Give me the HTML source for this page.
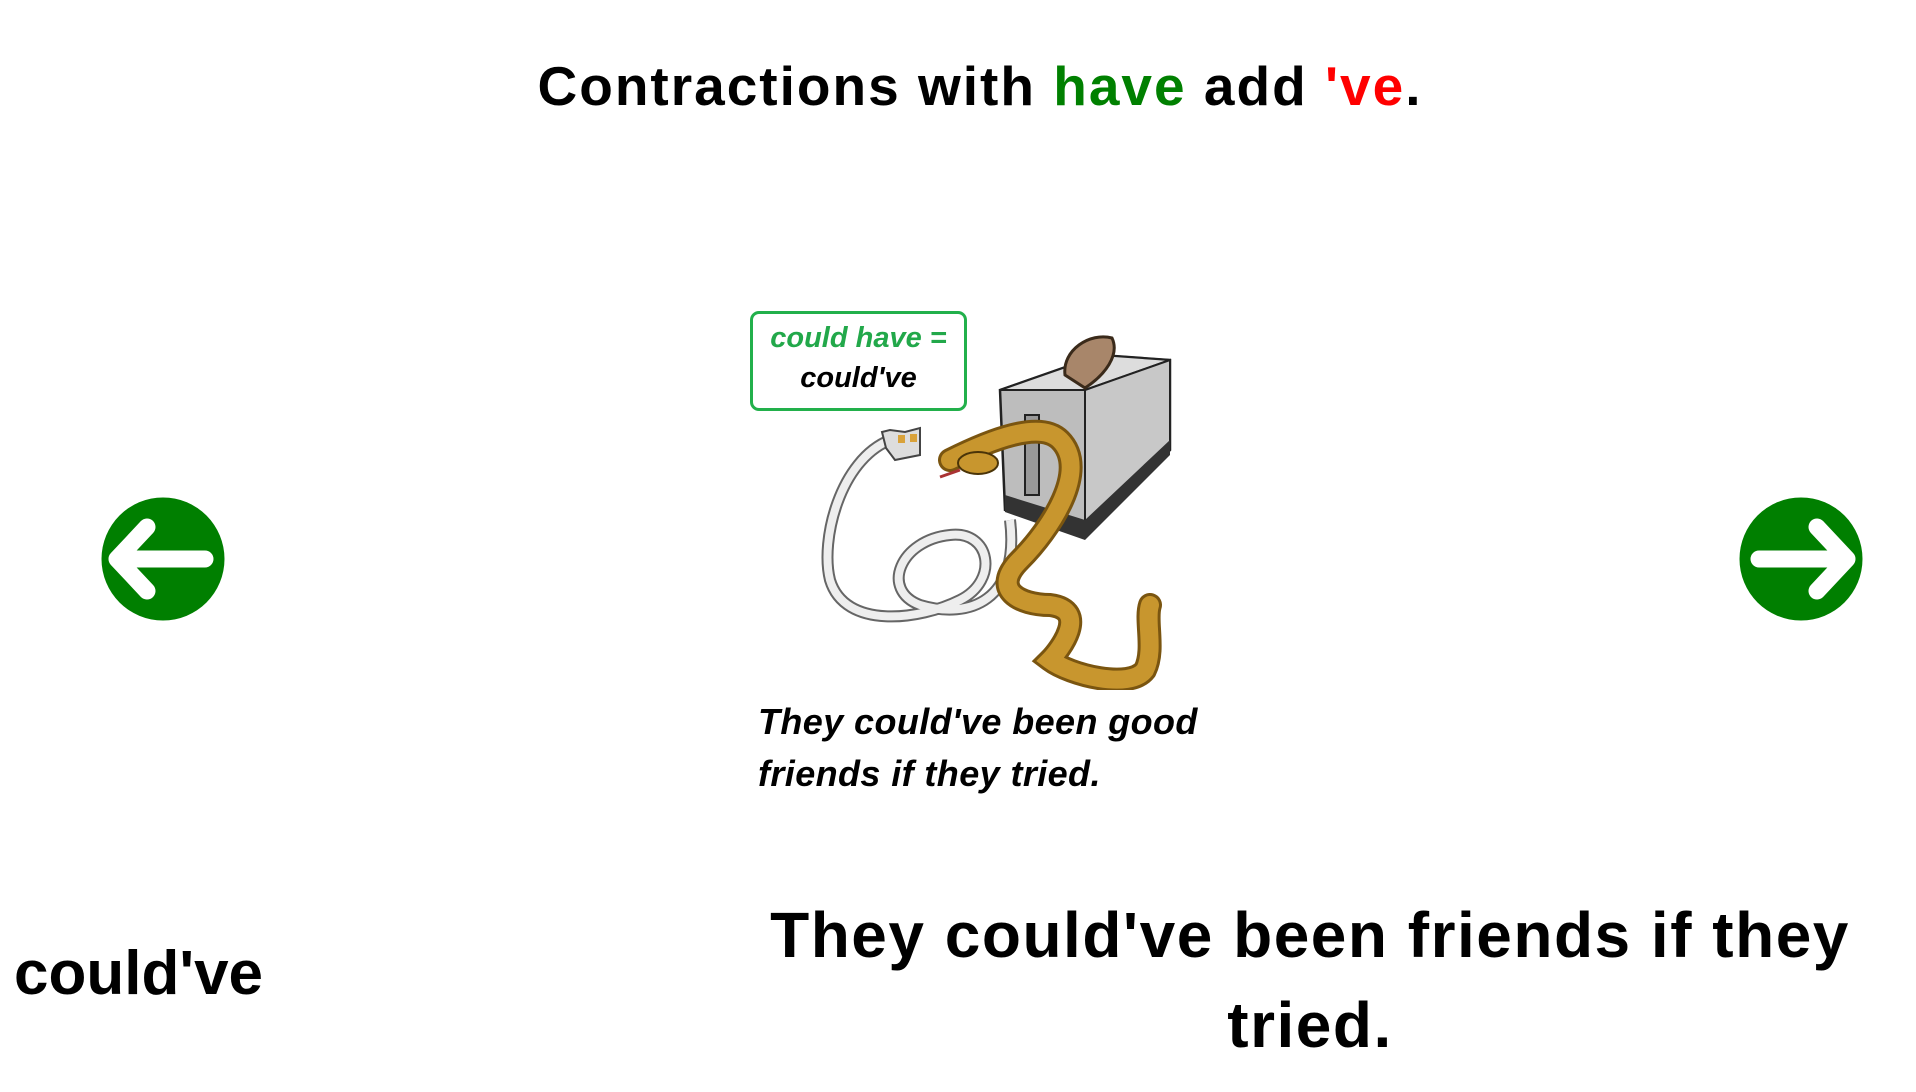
<!DOCTYPE html>
<html><head><meta charset="utf-8"><style>
html,body{margin:0;padding:0;background:#fff;width:1916px;height:1092px;overflow:hidden;position:relative;font-family:"Comic Sans MS","Liberation Sans",sans-serif;font-weight:bold;color:#000}
.abs{position:absolute;white-space:nowrap}
</style></head><body>
<div class="abs" style="left:0;width:1960px;top:54px;text-align:center;font-size:55px;letter-spacing:2px">Contractions with <span style="color:#008000">have</span> add <span style="color:#ff0000">'ve</span>.</div>

<svg class="abs" style="left:100px;top:496px" width="126" height="126" viewBox="0 0 126 126"><circle cx="63" cy="63" r="61.5" fill="#007f00"/><path d="M47 31 L17 63 L47 95 M17 63 L105 63" fill="none" stroke="#fff" stroke-width="17" stroke-linecap="round" stroke-linejoin="round"/></svg>
<svg class="abs" style="left:1738px;top:496px" width="126" height="126" viewBox="0 0 126 126"><circle cx="63" cy="63" r="61.5" fill="#007f00"/><path d="M79 31 L109 63 L79 95 M109 63 L21 63" fill="none" stroke="#fff" stroke-width="17" stroke-linecap="round" stroke-linejoin="round"/></svg>

<div class="abs" style="left:750px;top:311px;width:211px;height:90px;border:3px solid #22b04b;border-radius:9px;text-align:center;font-style:italic;font-size:29px;line-height:40px;padding-top:4px">
<span style="color:#22a84a">could have =</span><br>could've</div>

<svg class="abs" style="left:800px;top:320px" width="380" height="370" viewBox="0 0 380 370">
<path d="M90 120 C40 140 20 220 30 260 C45 310 120 300 160 280 C200 260 190 210 150 215 C100 220 80 270 120 285 C170 300 220 280 210 200" fill="none" stroke="#666" stroke-width="12"/>
<path d="M90 120 C40 140 20 220 30 260 C45 310 120 300 160 280 C200 260 190 210 150 215 C100 220 80 270 120 285 C170 300 220 280 210 200" fill="none" stroke="#eee" stroke-width="8"/>
<path d="M82 112 L90 110 L105 112 L120 108 L120 135 L95 140 L86 128 Z" fill="#ddd" stroke="#444" stroke-width="2"/>
<rect x="98" y="115" width="7" height="8" fill="#d9a23a"/><rect x="110" y="114" width="7" height="8" fill="#d9a23a"/>
<path d="M200 70 L300 35 L370 40 L370 130 L285 215 L205 190 Z" fill="#bdbdbd" stroke="#222" stroke-width="2.5"/>
<path d="M200 70 L300 35 L370 40 L285 70 Z" fill="#ddd" stroke="#222" stroke-width="2"/>
<path d="M285 70 L370 40 L370 130 L285 215 Z" fill="#c8c8c8" stroke="#222" stroke-width="2"/>
<path d="M205 175 L285 200 L370 120 L370 135 L285 220 L205 192 Z" fill="#333"/>
<path d="M265 55 C262 30 290 12 312 18 C320 35 305 55 285 68 Z" fill="#a8866a" stroke="#3a2a1a" stroke-width="3"/>
<rect x="225" y="95" width="14" height="80" fill="#999" stroke="#222" stroke-width="2"/>
<path d="M150 140 C190 120 240 100 260 120 C290 150 250 210 220 240 C190 270 220 285 250 285 C290 290 260 330 250 340 C270 355 330 370 345 350 C355 330 345 300 350 285" fill="none" stroke="#7a5510" stroke-width="24" stroke-linecap="round"/>
<path d="M150 140 C190 120 240 100 260 120 C290 150 250 210 220 240 C190 270 220 285 250 285 C290 290 260 330 250 340 C270 355 330 370 345 350 C355 330 345 300 350 285" fill="none" stroke="#c8962e" stroke-width="18" stroke-linecap="round"/>
<ellipse cx="178" cy="143" rx="20" ry="11" fill="#c8962e" stroke="#4a3408" stroke-width="2"/>
<path d="M160 150 L140 157" stroke="#a33" stroke-width="3"/>
</svg>

<div class="abs" style="left:758px;top:696px;font-style:italic;font-size:36px;line-height:52px;letter-spacing:0.4px">They could've been good<br>friends if they tried.</div>

<div class="abs" style="left:14px;top:938px;font-size:62px">could've</div>
<div class="abs" style="left:740px;width:1140px;top:890px;text-align:center;font-size:64px;line-height:90px;white-space:normal;letter-spacing:1.5px">They could've been friends if they tried.</div>
</body></html>
